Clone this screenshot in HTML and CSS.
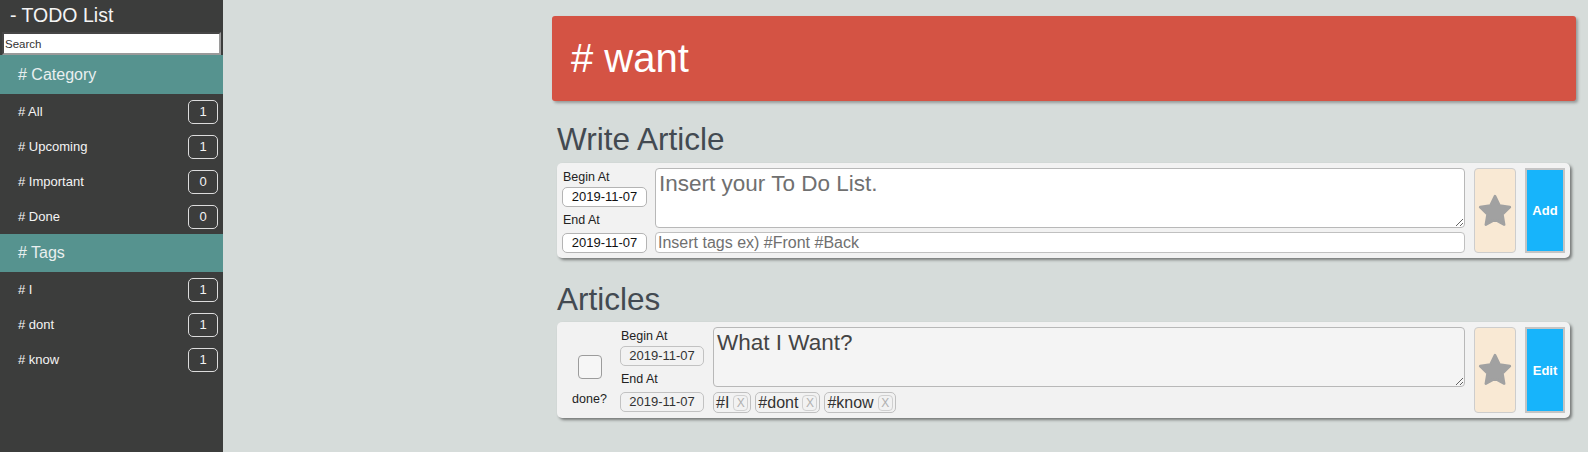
FILE: index.html
```html
<!DOCTYPE html>
<html>
<head>
<meta charset="utf-8">
<link rel="stylesheet" href="styles.css">
</head>
<body>
<div class="app">
  <aside class="sidebar">
    <div class="brand">- TODO List</div>
    <input class="search" type="text" placeholder="Search">
    <div class="sec-head">#&nbsp;Category</div>
    <div class="item"><span># All</span><span class="badge">1</span></div>
    <div class="item"><span># Upcoming</span><span class="badge">1</span></div>
    <div class="item"><span># Important</span><span class="badge">0</span></div>
    <div class="item"><span># Done</span><span class="badge">0</span></div>
    <div class="sec-head tags-head"># Tags</div>
    <div class="item"><span># I</span><span class="badge">1</span></div>
    <div class="item"><span># dont</span><span class="badge">1</span></div>
    <div class="item"><span># know</span><span class="badge">1</span></div>
  </aside>
  <main class="main">
    <div class="container">
      <div class="banner"># want</div>
      <h2 class="heading">Write Article</h2>
      <div class="card">
        <div class="dates">
          <div class="lbl">Begin At</div>
          <div class="date">2019-11-07</div>
          <div class="lbl lbl2">End At</div>
          <div class="date date2">2019-11-07</div>
        </div>
        <div class="fields">
          <textarea class="text" placeholder="Insert your To Do List."></textarea>
          <input class="tagsin" type="text" placeholder="Insert tags ex) #Front #Back">
        </div>
        <div class="starbox"><svg viewBox="0 0 24 24" class="star"><polygon points="12,2.6 14.9,8.6 21.4,9.5 16.7,14.1 17.8,20.6 12,17.5 6.2,20.6 7.3,14.1 2.6,9.5 9.1,8.6"/></svg></div>
        <div class="btn">Add</div>
      </div>
      <h2 class="heading heading2">Articles</h2>
      <div class="card">
        <div class="donecol">
          <div class="check"></div>
          <div class="donelbl">done?</div>
        </div>
        <div class="dates adates">
          <div class="lbl">Begin At</div>
          <div class="date gray">2019-11-07</div>
          <div class="lbl lbl2">End At</div>
          <div class="date date2 gray">2019-11-07</div>
        </div>
        <div class="fields">
          <textarea class="text atext">What I Want?</textarea>
          <div class="chips">
            <span class="chip">#I<span class="x">X</span></span>
            <span class="chip">#dont<span class="x">X</span></span>
            <span class="chip">#know<span class="x">X</span></span>
          </div>
        </div>
        <div class="starbox"><svg viewBox="0 0 24 24" class="star"><polygon points="12,2.6 14.9,8.6 21.4,9.5 16.7,14.1 17.8,20.6 12,17.5 6.2,20.6 7.3,14.1 2.6,9.5 9.1,8.6"/></svg></div>
        <div class="btn">Edit</div>
      </div>
    </div>
  </main>
</div>
</body>
</html>
```

FILE: styles.css
```css
* { box-sizing: border-box; }
html, body { margin: 0; padding: 0; }
body {
  font-family: "Liberation Sans", Arial, sans-serif;
  background: #d6dcda;
  width: 1588px;
  height: 452px;
  overflow: hidden;
}
.app { display: flex; height: 452px; }

.sidebar {
  width: 223px;
  flex: none;
  background: #3c3d3c;
  color: #f2f2f2;
  display: flex;
  flex-direction: column;
}
.brand {
  height: 32px;
  line-height: 30px;
  padding-left: 10px;
  font-size: 19.5px;
  color: #f4f4f4;
}
.search {
  margin: 0 2px;
  width: 219px;
  height: 23px;
  border: 2px inset #9a9a9a;
  background: #fff;
  font-family: "Liberation Sans", Arial, sans-serif;
  font-size: 11.5px;
  padding: 1px 1px;
  outline: none;
}
.search::placeholder { color: #333; }
.sec-head {
  height: 39px;
  line-height: 39px;
  background: #56938f;
  color: #e9efef;
  font-size: 16px;
  padding-left: 18px;
}
.tags-head { height: 38px; line-height: 37px; }
.item {
  height: 35px;
  display: flex;
  align-items: center;
  justify-content: space-between;
  padding: 0 5px 0 18px;
  font-size: 13px;
  color: #f4f4f4;
}
.badge {
  width: 30px;
  height: 24px;
  border: 1px solid #dcdcdc;
  border-radius: 5px;
  display: flex;
  align-items: center;
  justify-content: center;
  font-size: 13px;
}

.main { flex: 1; padding: 16px 0 0 329px; }
.container { width: 1024px; }
.banner {
  height: 85px;
  background: #d45344;
  border-radius: 3px;
  box-shadow: 2px 2px 3px rgba(0,0,0,0.3);
  color: #fff;
  font-size: 40px;
  line-height: 84px;
  padding-left: 19px;
}
.heading {
  margin: 21px 0 7px 5px;
  font-size: 31.5px;
  font-weight: normal;
  line-height: 34px;
  color: #434a51;
}
.heading2 { margin-top: 24px; margin-bottom: 6px; }

.card {
  margin: 0 6px 0 5px;
  background: #f2f2f2;
  border-radius: 5px;
  box-shadow: 2px 2px 3px rgba(0,0,0,0.45);
  display: flex;
  padding: 5px 5px 5px 5px;
}
.dates {
  width: 85px;
  flex: none;
  display: flex;
  flex-direction: column;
  margin-right: 8px;
}
.adates { width: 84px; margin-right: 9px; }
.lbl {
  height: 19px;
  line-height: 19px;
  font-size: 12.5px;
  color: #222;
  padding-left: 1px;
}
.lbl2 { margin-top: 4px; }
.date {
  height: 20px;
  border: 1px solid #b4b4b4;
  border-radius: 5px;
  background: #fff;
  font-size: 13px;
  line-height: 18px;
  text-align: center;
  color: #111;
}
.date2 { margin-top: 3px; }
.gray { background: #f2f2f2; color: #333; border-color: #c2c2c2; }

.fields {
  flex: 1;
  display: flex;
  flex-direction: column;
}
.text {
  height: 60px;
  width: 100%;
  border: 1px solid #b8b8b8;
  border-radius: 4px;
  background: #fff;
  font-family: "Liberation Sans", Arial, sans-serif;
  font-size: 22.5px;
  padding: 2px 3px;
  resize: vertical;
  outline: none;
  color: #444;
}
.text::placeholder { color: #707070; }
.atext { background: #f4f4f4; }
.tagsin {
  margin-top: 4px;
  height: 21px;
  width: 100%;
  border: 1px solid #c0c0c0;
  border-radius: 4px;
  background: #fff;
  font-family: "Liberation Sans", Arial, sans-serif;
  font-size: 16px;
  padding: 0 2px;
  outline: none;
}
.tagsin::placeholder { color: #707070; }

.chips { display: flex; gap: 4px; margin-top: 5px; }
.chip {
  height: 21px;
  border: 1px solid #c0c0c0;
  border-radius: 5px;
  font-size: 16px;
  line-height: 19px;
  color: #333;
  padding: 0 2px 0 2px;
  display: flex;
  align-items: center;
  gap: 4px;
}
.x {
  width: 15px;
  height: 16px;
  border: 1px solid #d0d0d0;
  border-radius: 4px;
  font-size: 12px;
  line-height: 14px;
  color: #b0b0b0;
  text-align: center;
}

.starbox {
  width: 42px;
  flex: none;
  margin-left: 9px;
  background: #f9e9d4;
  border: 1px solid #cdcdcd;
  border-radius: 4px;
  display: flex;
  align-items: center;
  justify-content: center;
}
.star { width: 38px; height: 38px; }
.star polygon { fill: #a1a1a1; stroke: #a1a1a1; stroke-width: 1.6; stroke-linejoin: round; }
.btn {
  width: 40px;
  flex: none;
  margin-left: 9px;
  background: #17b4fb;
  border: 2px solid #c4c4c4;
  color: #fff;
  font-weight: bold;
  font-size: 13px;
  display: flex;
  align-items: center;
  justify-content: center;
}

.donecol {
  width: 55px;
  flex: none;
  margin-right: 3px;
  display: flex;
  flex-direction: column;
  align-items: center;
  padding-top: 28px;
}
.check {
  width: 24px;
  height: 24px;
  border: 1px solid #9c9c9c;
  border-radius: 4px;
  background: #f6f6f6;
}
.donelbl {
  margin-top: 11px;
  font-size: 12.5px;
  line-height: 19px;
  color: #222;
}
```
